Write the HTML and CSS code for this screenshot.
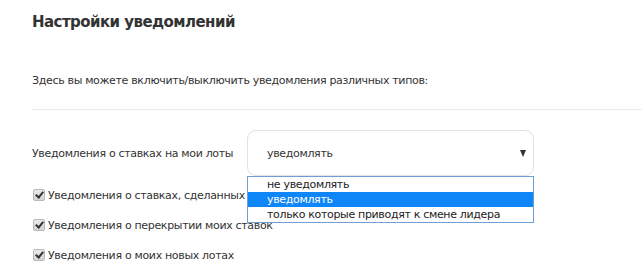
FILE: index.html
```html
<!DOCTYPE html>
<html lang="ru">
  <head>
    <meta charset="UTF-8" />
    <title>Настройки уведомлений</title>
    <link rel="stylesheet" href="styles.css">
  </head>
  <body>
    <div class="settings">
      <h1 class="settings_title">Настройки уведомлений</h1>
      <p class="settings_intro">Здесь вы можете включить/выключить уведомления различных типов:</p>
      <div class="divider"></div>

      <div class="form_row">
        <label class="form_label">Уведомления о ставках на мои лоты</label>
        <div class="select">
          <span class="select_value">уведомлять</span>
          <span class="select_arrow"></span>
          <ul class="select_list">
            <li>не уведомлять</li>
            <li class="active">уведомлять</li>
            <li>только которые приводят к смене лидера</li>
          </ul>
        </div>
      </div>

      <ul class="checks">
        <li class="check"><span class="check_box"></span>Уведомления о ставках, сделанных мной</li>
        <li class="check"><span class="check_box"></span>Уведомления о перекрытии моих ставок</li>
        <li class="check"><span class="check_box"></span>Уведомления о моих новых лотах</li>
      </ul>
    </div>
  </body>
</html>
```

FILE: styles.css
```css
* {
  margin: 0;
  padding: 0;
  box-sizing: border-box;
}
body {
  background: #fff;
  color: #333;
  font-family: "DejaVu Sans", Tahoma, sans-serif;
  font-size: 11px;
  letter-spacing: -0.33px;
}
.settings {
  padding-left: 32px;
}
.settings_title {
  font-size: 15px;
  font-weight: bold;
  line-height: 20px;
  padding-top: 12px;
  letter-spacing: -0.55px;
  color: #333;
}
.settings_intro {
  line-height: 16px;
  margin-top: 41px;
}
.divider {
  height: 1px;
  background: #ebebeb;
  margin-top: 20px;
}
.form_row {
  display: flex;
  align-items: center;
  margin-top: 20px;
}
.form_label {
  width: 215px;
}
.select {
  position: relative;
  width: 287px;
  height: 46px;
  border: 1px solid #e2e2e2;
  border-radius: 9px;
  display: flex;
  align-items: center;
  padding-left: 19px;
}
.select_value {
  flex: 1;
}
.select_arrow {
  width: 0;
  height: 0;
  border-left: 3.5px solid transparent;
  border-right: 3.5px solid transparent;
  border-top: 7px solid #333;
  margin-right: 7px;
}
.select_list {
  position: absolute;
  top: 45px;
  left: -1px;
  width: 287px;
  list-style: none;
  background: #fff;
  border: 1px solid #6f9fd6;
  z-index: 5;
}
.select_list li {
  line-height: 15px;
  padding-left: 19px;
  color: #222;
}
.select_list li.active {
  background: #0f86f8;
  color: #fff;
}
.checks {
  list-style: none;
  margin-top: 4px;
}
.check {
  display: flex;
  align-items: center;
  height: 30px;
}
.check_box {
  width: 12px;
  height: 12px;
  margin-left: 1px;
  margin-right: 3px;
  border: 1px solid #b9b9b9;
  border-radius: 2px;
  background: linear-gradient(#e9e9e9, #d4d4d4);
  position: relative;
}
.check_box::after {
  content: "";
  position: absolute;
  left: 3px;
  top: 0px;
  width: 3px;
  height: 6px;
  border-right: 2px solid #333;
  border-bottom: 2px solid #333;
  transform: rotate(40deg);
}
```
